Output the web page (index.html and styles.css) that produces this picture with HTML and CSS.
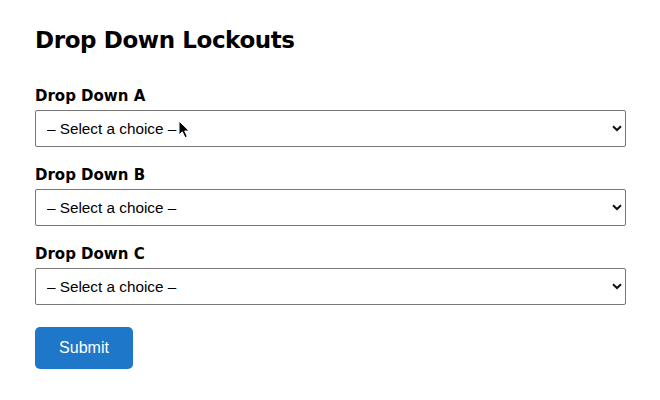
FILE: index.html
```html
<!DOCTYPE html>
<html>
<head>
	<title>Drop Down Lockouts</title>
	<link rel="stylesheet" href="styles.css">
</head>
<body>

	<form class="lockouts">
		<h1>Drop Down Lockouts</h1>

		<div class="field">
			<label for="ddA">Drop Down A</label>
			<div class="selectWrap">
				<select id="ddA" name="ddA">
					<option value="" selected="selected">&ndash; Select a choice &ndash;</option>
					<option value="1">Choice 1</option>
					<option value="2">Choice 2</option>
					<option value="3">Choice 3</option>
				</select>
				<svg class="chevron" width="10" height="7" viewBox="0 0 10 7"><path d="M1 1.2 L5 5 L9 1.2" fill="none" stroke="#111" stroke-width="2"/></svg>
				<svg class="cursor" width="13" height="19" viewBox="0 0 13 19"><path d="M1 1 L1 15 L4.3 11.8 L7 17.6 L9.3 16.6 L6.7 11 L11.2 11 Z" fill="#000" stroke="#fff" stroke-width="1"/></svg>
			</div>
		</div>

		<div class="field">
			<label for="ddB">Drop Down B</label>
			<div class="selectWrap">
				<select id="ddB" name="ddB">
					<option value="" selected="selected">&ndash; Select a choice &ndash;</option>
					<option value="1">Choice 1</option>
					<option value="2">Choice 2</option>
					<option value="3">Choice 3</option>
				</select>
				<svg class="chevron" width="10" height="7" viewBox="0 0 10 7"><path d="M1 1.2 L5 5 L9 1.2" fill="none" stroke="#111" stroke-width="2"/></svg>
			</div>
		</div>

		<div class="field">
			<label for="ddC">Drop Down C</label>
			<div class="selectWrap">
				<select id="ddC" name="ddC">
					<option value="" selected="selected">&ndash; Select a choice &ndash;</option>
					<option value="1">Choice 1</option>
					<option value="2">Choice 2</option>
					<option value="3">Choice 3</option>
				</select>
				<svg class="chevron" width="10" height="7" viewBox="0 0 10 7"><path d="M1 1.2 L5 5 L9 1.2" fill="none" stroke="#111" stroke-width="2"/></svg>
			</div>
		</div>

		<button type="button" class="submit">Submit</button>
	</form>

</body>
</html>
```

FILE: styles.css
```css
body{
	margin: 0;
	background: #fff;
	color: #000;
	font-family: "DejaVu Sans", Verdana, sans-serif;
}

.lockouts{
	padding: 24px 34px 0 35px;
	width: 591px;
}

h1{
	font-size: 23px;
	font-weight: bold;
	margin: 0 0 30px;
	line-height: 32px;
	letter-spacing: -0.4px;
}

.field{
	margin-bottom: 18px;
}

label{
	display: block;
	font-size: 15px;
	font-weight: bold;
	line-height: 20px;
	margin-bottom: 4px;
	letter-spacing: 0;
}

.selectWrap{
	position: relative;
}

select{
	-webkit-appearance: none;
	appearance: none;
	display: block;
	width: 100%;
	height: 37px;
	margin: 0;
	padding: 0 30px 0 11px;
	border: 1px solid #777;
	border-radius: 2px;
	background: #fff;
	color: #000;
	font-family: "Liberation Sans", Arial, sans-serif;
	font-size: 15.3px;
}

.chevron{
	position: absolute;
	right: 4px;
	top: 15px;
	pointer-events: none;
}

.cursor{
	position: absolute;
	left: 143px;
	top: 10px;
	pointer-events: none;
}

.submit{
	display: block;
	margin-top: 22px;
	width: 98px;
	height: 42px;
	border: 0;
	border-radius: 5px;
	background-color: #1f77c9;
	color: #fff;
	font-family: "Liberation Sans", Arial, sans-serif;
	font-size: 16px;
}
```
